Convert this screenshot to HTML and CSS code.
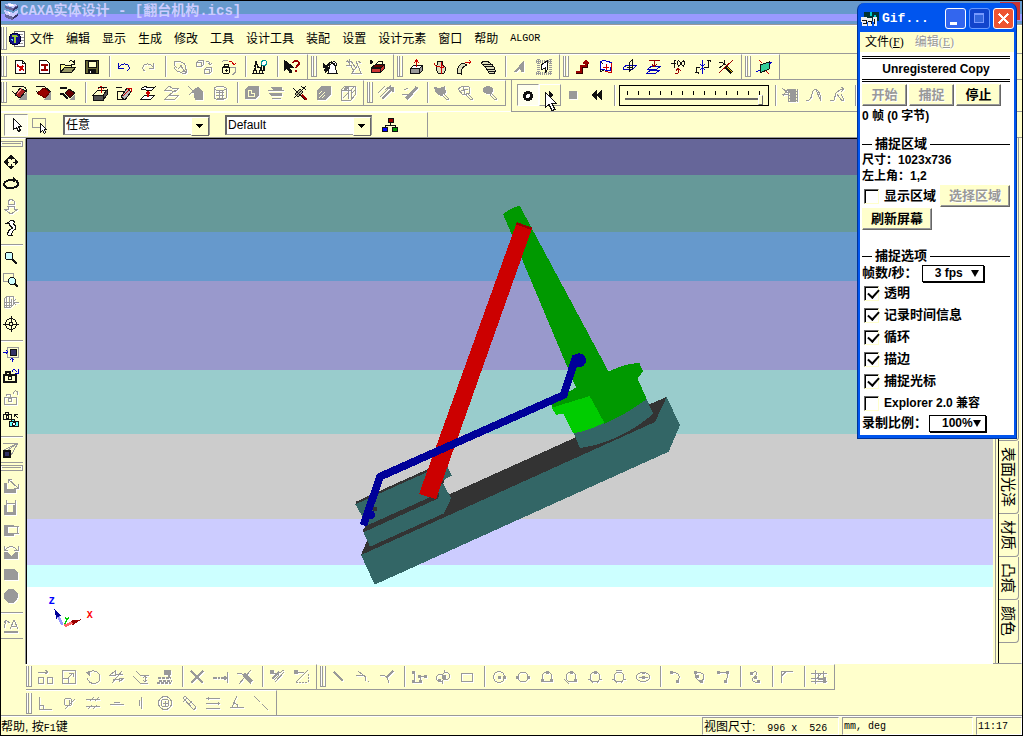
FILE: index.html
```html
<!DOCTYPE html>
<html lang="zh-CN">
<head>
    <meta charset="UTF-8">
    <meta name="viewport" content="width=device-width, initial-scale=1.0">
    <title>CAXA实体设计</title>
    <link rel="stylesheet" href="styles.css">
</head>
<body>
    <header class="titlebar">
        <svg class="logo" viewBox="0 0 16 18"><path fill="#ccf" d="M1 3l5-2 9 2-5 3zM1 8l9 3 5-3v3l-5 4-8-3z"/><path fill="#669" d="M10 6l5-3v3l-5 3-8-3V4zM2 12l8 3 5-3v2l-6 4-7-3z"/><path fill="#336" d="M10 7l5-3v2l-5 3zM10 15l5-3v2l-5 3z"/><path fill="#fff" d="M3 3l4-1 5 1-3 1zM3 9l5 2-2 1z"/></svg>
        <h1>CAXA实体设计 - [翻台机构.ics]</h1>
        <button class="close" aria-label="关闭程序"></button>
    </header>

    <nav class="menubar">
        <span class="grip"></span>
        <svg class="doc" viewBox="0 0 18 18"><path fill="#fff" stroke="#666" d="M6.500 1.500h10v15h-10z"/><path stroke="#999" d="M9 4.500h6M12 7.500h4M12 10.500h4M9 13.500h6"/><circle cx="7" cy="9" r="6" fill="#118" stroke="#003"/><path stroke="#9c3" stroke-width="2" d="M4 7q3-3 5 0M7 6v7"/><path fill="#6cf" d="M3 9h2v3z"/></svg>
        <button>文件</button>
        <button>编辑</button>
        <button>显示</button>
        <button>生成</button>
        <button>修改</button>
        <button>工具</button>
        <button>设计工具</button>
        <button>装配</button>
        <button>设置</button>
        <button>设计元素</button>
        <button>窗口</button>
        <button>帮助</button>
        <button class="latin">ALGOR</button>
    </nav>

    <!-- standard, feature and surface toolbars -->
    <div class="row">
        <div class="bar first">
            <span class="grip"></span>
            <button class="tb" title="新建"><svg viewBox="0 0 16 16"><path fill="#fff" d="M3.500 1.500h7l3 3v10h-10z"/><path d="M10.500 1.500v3h3"/><path stroke="#c00" stroke-width="2" d="M5 6l4 3 2-2M7 11l3-1 2 1"/></svg></button>
            <button class="tb" title="新图纸"><svg viewBox="0 0 16 16"><path fill="#fff" d="M3.500 1.500h7l3 3v10h-10z"/><path stroke="#900" stroke-width="2" d="M5 6h7M5 11h7M8.500 6v5"/></svg></button>
            <button class="tb" title="打开"><svg viewBox="0 0 16 16"><path fill="#ff9" d="M.5 13.500v-8h4l1 1h6v3"/><path fill="#996" d="M.5 13.500l4-5h11l-4 5z"/><path d="M9 3q3-3 5 1M14 1v4h-3"/></svg></button>
            <button class="tb" title="保存"><svg viewBox="0 0 16 16"><path fill="#663" d="M1.500 1.500h13v13h-13z"/><path fill="#ffc" d="M4 2h8v6H4z"/><path fill="#111" d="M4.500 10.500h7v4h-7z"/><path stroke="#fff" d="M6 12v2"/></svg></button>
            <span class="sep"></span>
            <button class="tb blue" title="撤销"><svg viewBox="0 0 16 16"><path d="M2.500 4v5h5M3 8q4-5 9-2 3 4-1 6"/></svg></button>
            <button class="tb off" title="重做"><svg viewBox="0 0 16 16"><path d="M13.500 4v5h-5M13 8q-4-5-9-2-3 4 1 6"/></svg></button>
            <span class="sep"></span>
            <button class="tb off" title="旋转"><svg viewBox="0 0 16 16"><path d="M2 2h4M2 2v4l3 3M6 3q6-1 8 5-1 6-6 5-5-1-6-5M8 6l6 8M14 14v-4M14 14h-4M6 10l4-4"/></svg></button>
            <button class="tb off" title="复制"><svg viewBox="0 0 16 16"><path d="M.5 3.500l2-2h5v4l-2 2h-5zM.5 3.500h5v4M8.500 10.500l2-2h5v4l-2 2h-5zM8.500 10.500h5v4M10 2q4 0 4 4M12 4l2 2 2-2"/></svg></button>
            <button class="tb" title="锁定"><svg viewBox="0 0 16 16"><path stroke="#999" d="M1.500 3.500l2-2h4M10.500 9v-1h5v5l-2 2h-2"/><path stroke="#c00" d="M9 2q4 0 5 4M12 4l2 2 2-2"/><circle cx="6" cy="11" r="4" fill="#ffc"/><path d="M4 8V5h4v3M6 10v3M5 11h3M3 8h6"/></svg></button>
            <span class="sep"></span>
            <button class="tb" title="浏览"><svg viewBox="0 0 16 16"><path d="M1 14l2-5 2 5zM3 9V5l1-3 1 3v4M7 14l2-5 2 5zM5 8h4V3M2 8l2-4 3 5"/><circle cx="12" cy="4" r="2.500" stroke="#099" fill="#fff"/><path d="M12 7v5" stroke-width="2"/></svg></button>
            <span class="sep"></span>
            <button class="tb" title="帮助"><svg viewBox="0 0 16 16"><path fill="#111" d="M0 1v11l3-3 3 5 2-1-3-5h4z"/><path stroke="#900" stroke-width="2" d="M9 4q1-3 4-2 4 2 0 5l-1 2M12 11v2"/></svg></button>
        </div>
        <div class="bar">
            <span class="grip"></span>
            <button class="tb" title="三维球"><svg viewBox="0 0 16 16"><path fill="#fff" d="M6 14l2-8 4-4 3 3-2 3 2 6z"/><path stroke-width="2" d="M1 5l4 3 3-5M2 11l5-2M9 3l4 3M1 8h4M3 13l4-3"/><path d="M6 14h9"/></svg></button>
            <button class="tb off" title="编辑三维球"><svg viewBox="0 0 16 16"><path d="M0 2h5l4 6M1 1l7 11M0 6h6M3 0v6M10 2l5 12H6l5-7M12 2l3 2"/></svg></button>
            <button class="tb" title="工具箱"><svg viewBox="0 0 16 16"><path d="M0 1v4l3-2z" fill="#111"/><path fill="#600" d="M1.500 8.500l4-3h9l-3 3z"/><path fill="#c33" d="M1.500 9.500h9v4h-9zM10.500 9.500l4-4v4l-4 4z"/><path d="M6 5l3-3h3v3"/></svg></button>
        </div>
        <div class="bar">
            <span class="grip"></span>
            <button class="tb" title="拉伸"><svg viewBox="0 0 16 16"><path fill="#fff" d="M2.500 9.500l3-3h9l-3 3z"/><path fill="#999" d="M2.500 9.500h9v5h-9zM11.500 9.500l3-3v5l-3 3z"/><path stroke="#c00" d="M8.500 8V2M6 4l2.500-3L11 4"/></svg></button>
            <button class="tb" title="旋转特征"><svg viewBox="0 0 16 16"><path fill="#ddb" d="M5 2h6l-1 3q6 4 2 9H6q-4-5 0-9z"/><path stroke="#c00" d="M9 3v12M2 4q1 5 10 4l-2-2"/></svg></button>
            <button class="tb" title="扫描"><svg viewBox="0 0 16 16"><path fill="#ddb" d="M1 14q0-8 6-10l4 2q-6 2-6 9z"/><path stroke="#c00" d="M9 3h6M13 1l2 2-2 2"/></svg></button>
            <button class="tb" title="放样"><svg viewBox="0 0 16 16"><path fill="#ddb" d="M1 4q4-4 9 0 6 4 5 10l-6 0Q7 9 1 4z"/><path d="M3 6l8-1M5 8l8-1M7 11l7-1M8 13l7-1"/></svg></button>
            <span class="sep"></span>
            <button class="tb off" title="拔模"><svg viewBox="0 0 16 16"><path class="f" d="M2 13L12 1v12h-3l-1-4-4 4z"/></svg></button>
            <button class="tb" title="抽壳"><svg viewBox="0 0 16 16"><path stroke="#999" stroke-width="3" stroke-dasharray="1 1" d="M0 2h16M0 14h16M2 0v16M14 0v16"/><path fill="#fff" d="M5 6l6-4v9l-2 3v-5l-4 2z"/></svg></button>
        </div>
        <div class="bar">
            <span class="grip"></span>
            <button class="tb" title="三维曲线"><svg viewBox="0 0 16 16"><path stroke="#300" stroke-width="3" d="M2 13h5V7h5V4"/><path stroke="#900" stroke-width="2" d="M2 13h5V7h5V3M9 5l3-3 3 3"/></svg></button>
            <button class="tb" title="曲面"><svg viewBox="0 0 16 16"><path fill="#fff" stroke="#00c" d="M2 3q4-3 12 1l-2 8-10-2z"/><path stroke="#c00" d="M14 4l-1 10-6-2M5 8h6M8 5v6"/><path d="M3 3l2 2M2 10v3l4-2"/></svg></button>
            <button class="tb blue" title="基准面"><svg viewBox="0 0 16 16"><path d="M1 9l4-3h10l-4 4H1z"/><path stroke="#111" d="M7 13V4l3-3v9zM5 8h6"/></svg></button>
            <button class="tb blue" title="偏移面"><svg viewBox="0 0 16 16"><path d="M2 10l4-3h9l-4 3zM1 14l4-3h9l-4 3z"/><path stroke="#900" d="M3 1.500h11M8.500 2v6M6 5l2 3 3-3"/></svg></button>
            <button class="tb" title="公式曲线"><svg viewBox="0 0 16 16"><path d="M4 9V2l2-1M1 4h5M9 1q-3 3 0 7M13 1q3 3 0 7M9 2l4 5M13 2L9 7"/><path stroke="#900" d="M5 15l3-1v-4M6 12l2-3 3 3"/></svg></button>
            <button class="tb" title="组合曲线"><svg viewBox="0 0 16 16"><path d="M2 14l1-6h3M10 8h4V2"/><path stroke="#00c" d="M8.500 1v14M6 5l2.500 2L11 5M6 11l2.500-2 2.500 2"/><path d="M1 13h3v2M13 1h3v2"/></svg></button>
            <button class="tb" title="裁剪曲线"><svg viewBox="0 0 16 16"><path d="M1 3q8 0 12 12M7 1q0 5-6 8"/><path stroke="#900" d="M1 14L15 1"/><path stroke-width="3" d="M8 8l6 6"/><path stroke="#fc0" d="M9 8l5 5"/></svg></button>
        </div>
        <div class="bar">
            <span class="grip"></span>
            <button class="tb" title="剖视"><svg viewBox="0 0 16 16"><path fill="#3c9" d="M4 6l9-3v7l-9 4z"/><path stroke="#00c" d="M0 13l4-2M13 5l3-2"/><path stroke="#c00" d="M3 1l3 3M10 12l3 3"/></svg></button>
        </div>
    </div>

    <!-- chamfer / solid tools and the animation player -->
    <div class="row tall">
        <div class="bar first">
            <span class="grip"></span>
            <button class="tb" title="圆角过渡"><svg viewBox="0 0 16 16"><path fill="#999" stroke="none" d="M6 15l9-9v9z"/><path fill="#a22" d="M3 10l5-7 6 3-6 7z"/><path stroke="#f99" d="M5 9l5-6"/><path d="M0 1h9q6 1 6 6M0 6l3 3"/></svg></button>
            <button class="tb" title="边过渡"><svg viewBox="0 0 16 16"><path fill="#999" stroke="none" d="M8 15l7-9v9z"/><path fill="#900" stroke="#600" d="M1 8l7-5 6 4-5 6z"/><path d="M0 1h8l7 6M0 6l2 2"/></svg></button>
            <button class="tb" title="倒角"><svg viewBox="0 0 16 16"><path fill="#999" stroke="none" d="M9 15l6-6v6z"/><path fill="#600" d="M5 8l4-4 6 4-5 5z"/><path stroke-width="2" d="M0 3h7M0 9h3l5 5"/></svg></button>
            <span class="sep"></span>
            <button class="tb" title="面拔模"><svg viewBox="0 0 16 16"><path fill="#ffc" d="M1 10l5-5h9l-4 5z"/><path fill="#555" d="M1 10h10v5H1zM11 10l4-5v5l-4 5z"/><path stroke="#c00" d="M9 8V1M6 4l3-3 3 3"/><path d="M6 2h9"/></svg></button>
            <button class="tb" title="表面移动"><svg viewBox="0 0 16 16"><path d="M0 2h6M1 6h6v8H1z"/><path fill="#bbb" d="M5 12l6-9 4 4-6 8z"/><path stroke="#c00" d="M7 11l8-8M11 3h4v4"/></svg></button>
            <button class="tb" title="表面等距"><svg viewBox="0 0 16 16"><path fill="#fff" d="M1 4q4-4 7-1l7-1-4 4q-5-1-10-2zM1 14l4-4h10l-4 4z"/><path stroke="#c00" stroke-width="2" d="M8 12V7M6 9l2-2 2 2"/></svg></button>
            <button class="tb off" title="表面匹配"><svg viewBox="0 0 16 16"><path d="M1 5l4-4 3 2h7l-4 4q-5-2-10-2zM1 14l4-4h10l-4 4zM4 11l8-6"/></svg></button>
            <button class="tb off" title="删除表面"><svg viewBox="0 0 16 16"><path class="f" d="M5 5l5-3 5 5v8H7z"/><path d="M0 1l14 13M1 10l8-7"/></svg></button>
            <button class="tb off" title="编辑半径"><svg viewBox="0 0 16 16"><path d="M2 3q6-4 12 0v10q-6 4-12 0zM2 4q6 4 12 0M4 7h8M4 10h8M5 13h7M7 6v8M10 6v8"/></svg></button>
            <span class="sep"></span>
            <button class="tb off" title="布尔"><svg viewBox="0 0 16 16"><path class="f" d="M1 4l3-3h11v9l-4 4H1z"/><path stroke="#ffc" d="M4 5v6h6V8H7V5z"/></svg></button>
            <button class="tb off" title="分割"><svg viewBox="0 0 16 16"><path class="f" d="M3 2h11v3H5zM0 8h14v3H3zM4 13h9v1H4z"/><path d="M0 6l16-1"/></svg></button>
            <button class="tb" title="裁剪"><svg viewBox="0 0 16 16"><path fill="#bb9" d="M3 9l5-5 3 3-5 5z"/><path d="M1 3l12 12M2 13L14 1M9 1l5 4"/><path stroke="#900" stroke-width="2" d="M10 10l5 5"/></svg></button>
            <button class="tb off" title="抽壳体"><svg viewBox="0 0 16 16"><path class="f" d="M1 5l4-4h10v8l-5 6H1z"/><path stroke="#ffc" d="M3 13l6-6M3 9l3-3M6 13l3-3"/></svg></button>
            <button class="tb off" title="装配特征"><svg viewBox="0 0 16 16"><path d="M1 5l4-4h10v9l-4 5H1zM1 5h10v10M11 5l4-4M8 1v13M3 13l6-6M12 8l3-3"/><path class="f" d="M5 2h4l-2 3H4z"/></svg></button>
        </div>
        <div class="bar">
            <span class="grip"></span>
            <button class="tb off" title="定位"><svg viewBox="0 0 16 16"><path d="M0 8l7-7M2 12l9-9M7 5l5-4v5"/><path stroke-width="2" d="M4 14l11-11M10 3h5v4"/></svg></button>
            <button class="tb off" title="约束"><svg viewBox="0 0 16 16"><path d="M0 9h7l5-4M2 5l4-2"/><path stroke-width="3" d="M4 14l5-5 6-7"/></svg></button>
            <span class="sep"></span>
            <button class="tb off" title="选择零件"><svg viewBox="0 0 16 16"><path class="f" d="M0 2l5 1 6-2 1 7-5 3-5-3z"/><path d="M9 8l6 6-2 1-5-5z"/></svg></button>
            <button class="tb off" title="选择面"><svg viewBox="0 0 16 16"><path d="M0 4l5-3 6 1 1 6-7 2zM3 6l7-2M5 2l2 7M9 8l6 6-2 1-5-5z"/></svg></button>
            <button class="tb off" title="选择边"><svg viewBox="0 0 16 16"><ellipse class="f" cx="6" cy="5" rx="5" ry="4"/><path d="M9 8l6 6-2 1-5-5z"/></svg></button>
        </div>
        <div class="player">
            <button class="tb on" title="开"><svg viewBox="0 0 16 16"><circle cx="8" cy="9" r="3.500" fill="#fff" stroke-width="3"/></svg></button>
            <button class="tb up" title="播放"><svg viewBox="0 0 16 16"><path fill="#111" d="M7 4l4 4-4 4z"/></svg><svg class="pointer" viewBox="0 0 12 20"><path fill="#fff" stroke="#111" d="M.5.5v15l3.500-3 3 6 3-1-3-6h4.500z"/></svg></button>
            <button class="tb off" title="停止"><svg viewBox="0 0 16 16"><path class="f" d="M4 4h8v8H4z"/></svg></button>
            <button class="tb" title="回退"><svg viewBox="0 0 16 16"><path fill="#111" d="M7 4v8L3 8zM12 4v8L8 8z"/></svg></button>
            <span class="sep"></span>
            <span class="track"><input type="range" min="0" max="100" value="100" aria-label="时间"></span>
            <span class="sep"></span>
            <button class="tb off" title="动画"><svg viewBox="0 0 16 16"><path class="f" d="M6 2h10v13H6z"/><path d="M0 1l7 6M0 7h7M1 9l5-7"/><path stroke="#ffc" stroke-dasharray="2 1" d="M14.500 2v13M7.500 6v9"/></svg></button>
            <button class="tb off" title="路径"><svg viewBox="0 0 16 16"><path d="M0 14q5 0 6-7 2-7 6-3 3 4 3 10M10 3l4 9"/></svg></button>
            <button class="tb off" title="关键帧"><svg viewBox="0 0 16 16"><path d="M0 13h4l2-7 5-4h3M11 0l3 2-3 3M7 7l5 7 2-1-3-6"/></svg></button>
            <span class="sep"></span>
        </div>
    </div>

    <div class="row select-row">
        <div class="bar select-bar">
            <button class="tb on" title="选择"><svg viewBox="0 0 16 16"><path fill="#fff" d="M5.500 1.500v11l3-2 2 4 2-1-2-4h3z"/></svg></button>
            <button class="tb" title="框选"><svg viewBox="0 0 16 16"><path stroke="#999" d="M.5 1.500h13v9H.5z"/><path fill="#fff" d="M8.500 6.500v9l2-2 2 3 1-1-1-3h2z"/></svg></button>
            <span class="combo"><select aria-label="选择过滤"><option>任意</option></select></span>
            <span class="combo"><select aria-label="配置"><option>Default</option></select></span>
            <button class="tb" title="结构"><svg viewBox="0 0 16 16"><path d="M8.500 5v4M3.500 11V8.500h10V11"/><path fill="#900" d="M6.500 1.500h5v4h-5z"/><path fill="#00f" d="M.5 10.500h5v4h-5z"/><path fill="#090" d="M10.500 10.500h5v4h-5z"/></svg></button>
        </div>
    </div>

    <main>
        <aside class="side">
            <div class="vbar">
                <span class="grip"></span>
                <button class="tb" title="平移"><svg viewBox="0 0 16 16"><path fill="#111" d="M8 1l3 3H5zM8 15l3-3H5zM1 8l3-3v6zM15 8l-3-3v6z"/><path d="M8 4v2M8 10v2M4 8h2M10 8h2"/></svg></button>
                <button class="tb" title="动态旋转"><svg viewBox="0 0 16 16"><path stroke-width="2" d="M11 4q-8-1-10 4 1 5 8 4 7-1 6-5l-2-3"/><path d="M10 1v5l3-2z" fill="#111"/></svg></button>
                <button class="tb off" title="前后缩放"><svg viewBox="0 0 16 16"><path d="M5 6V3l3-2 3 2v3zM4 8h8M5 8v3H1l7 5 7-5h-4V8"/></svg></button>
                <button class="tb" title="任意视向"><svg viewBox="0 0 16 16"><path fill="#fff" d="M9 0L4 3h3q-2 2 3 5-6 2-5 7h4q-1-4 4-6 0-4-3-5l2-2z"/></svg></button>
                <span class="sep"></span>
                <button class="tb" title="缩放"><svg viewBox="0 0 16 16"><circle cx="6" cy="6" r="4" fill="#cff"/><path stroke-width="2" d="M9 9l5 5"/></svg></button>
                <button class="tb" title="窗口缩放"><svg viewBox="0 0 16 16"><path stroke="#999" d="M.5 1.500h10v8H.5z"/><circle cx="9" cy="9" r="3.500" fill="#cff"/><path stroke-width="2" d="M12 12l3 3"/></svg></button>
                <button class="tb off" title="指定面"><svg viewBox="0 0 16 16"><path d="M1 5l3-3h6v9l-2 2H1zM1 8h7M1 11h7M3 3v10M6 3v10M8 5v8M16 8h-5M13 5l-3 3 3 3"/></svg></button>
                <button class="tb" title="指定中心"><svg viewBox="0 0 16 16"><circle cx="8" cy="8" r="5.500"/><circle cx="8" cy="8" r="2"/><path d="M8.500 0v6M8.500 10v6M0 8.500h6M10 8.500h6"/></svg></button>
                <span class="sep"></span>
                <button class="tb" title="全部显示"><svg viewBox="0 0 16 16"><path stroke="#999" d="M4.500 1.500h11v10h-11z"/><path fill="#336" d="M7.500 3.500h6v6h-6z"/><path stroke="#00c" d="M0 6.500h5M3 4l2 2-2 2M9.500 16v-4M7 14l2-2 2 2"/></svg></button>
                <button class="tb" title="保存视向"><svg viewBox="0 0 16 16"><path stroke-width="2" d="M1 7h12v7H1zM3 6V4h4v3"/><circle cx="7" cy="10" r="2"/><path stroke="#00c" d="M9 4q2-5 5 0M15 1v4h-3"/></svg></button>
                <button class="tb off" title="恢复视向"><svg viewBox="0 0 16 16"><path d="M1 7h12v7H1zM3 6V4h4v3M10 4q2-5 5-2-2 2 0 3"/><circle cx="7" cy="10" r="2"/></svg></button>
                <button class="tb" title="切换相机"><svg viewBox="0 0 16 16"><path fill="#ffc" d="M.5 2.500h8v5h-8zM2.500 2.500v-2h3v2"/><path fill="#6ff" d="M6.500 9.500h9v5h-9zM8.500 9.500v-2h3v2"/><circle cx="4.500" cy="5" r="1.500"/><circle cx="11" cy="12" r="1.500" fill="#fff"/><path d="M11 2l4 4M11 5V2h4"/></svg></button>
                <span class="sep"></span>
                <button class="tb" title="透视"><svg viewBox="0 0 16 16"><path stroke="#999" d="M0 1h15L1 8M15 1L7 15M15 1L5 8"/><path fill="#336" stroke-width="2" d="M1 9h6v6H1z"/></svg></button>
            </div>
            <div class="vbar">
                <span class="grip"></span>
                <button class="tb off" title="线性标注"><svg viewBox="0 0 16 16"><path class="f" d="M1 5h3v6h9v4H1z"/><path d="M5 1l10 9M5 5V1h4M15 6v4h-4"/></svg></button>
                <button class="tb off" title="水平标注"><svg viewBox="0 0 16 16"><path class="f" d="M1 5h3v7h6V5h3v10H1z"/><path d="M3 0v5M12 0v5M3 3h9"/></svg></button>
                <button class="tb off" title="垂直标注"><svg viewBox="0 0 16 16"><path class="f" d="M1 3h10v2H5v6h6v3H1z"/><path d="M11 4h5M11 11h5M14 4v7"/></svg></button>
                <button class="tb off" title="角度标注"><svg viewBox="0 0 16 16"><path class="f" d="M1 8h3l4 4 4-4h3v7H1z"/><path d="M2 6q6-7 12 0M1 2v4h4M15 2v4h-4"/></svg></button>
                <button class="tb off" title="半径标注"><svg viewBox="0 0 16 16"><path class="f" d="M1 3h10l4 4v7H1z"/></svg></button>
                <button class="tb off" title="直径标注"><svg viewBox="0 0 16 16"><circle class="f" cx="8" cy="8" r="7"/></svg></button>
                <span class="sep"></span>
                <button class="tb off" title="文字"><svg viewBox="0 0 16 16"><path class="f" d="M1 13h14v2H1z"/><path d="M7 11l4-9 4 9M8 8h5M1 10l2-8 4 3M1 5l2-3"/></svg></button>
            </div>
        </aside>

        <section class="canvas">
            <svg class="model" viewBox="0 0 1080 1230">
                <path fill="#333" d="M63 1095L80 1055 330 912 705 743 930 642 980 621 945 700z"/>
                <path fill="#366" d="M63 1095L945 696 980 621 1020 706 986 785 104 1184z"/>
                <path fill="#333" d="M46 936L262 838 325 830 310 880 333 925 312 972 90 1070 70 1020 80 1000z"/>
                <path fill="#366" d="M46 943L262 846 320 826 336 857 305 873 296 910 82 1006z"/>
                <path fill="#366" d="M70 1026L295 924 290 890 310 880 333 925 312 970 90 1070z"/>
                <path fill="#333" d="M70 1018L290 919 297 908 295 925 70 1027zM100 950h11v12h-11z"/>
                <path fill="#366" d="M700 727q110-20 218-103l22 47q-100 86-220 103z"/>
                <path fill="#090" d="M489 72q25-18 50-25L806 545q50-25 92-26l11 25-16 22 27 61q-60 45-128 75l-45-82-110 35-4-20 75-42z"/>
                <path fill="#0c0" d="M636 653l113-35 44 80q-45 24-93 32l-29-58-24 2z"/>
                <path fill="#c00" d="M530 98l46 17-288 812-51-15z"/>
                <path fill="#900" d="M530 96l46 17-2 7-46-17z"/>
                <path fill="none" stroke="#009" stroke-width="23" d="M70 1006L120 860 671 615 709 497"/>
                <circle cx="717" cy="511" r="21" fill="#009"/>
                <circle cx="91" cy="974" r="14" fill="#009"/>
            </svg>
            <svg class="axes" viewBox="140 585 156 114">
                <path fill="#009" d="M162 627l20 20-14 10z"/><path stroke="#99f" stroke-width="8" d="M174 651l12 24"/>
                <path fill="#900" d="M243 658l-26 18-5-14z"/><path stroke="#f66" stroke-width="8" d="M192 678l24-10"/>
                <path stroke="#0c0" stroke-width="4" d="M194 652l5 8 6-8M199 660l-5 12"/>
                <text x="145" y="611" fill="#00f">Z</text>
                <text x="259" y="654" fill="#f00">X</text>
            </svg>
        </section>

        <aside class="catalog">
            <div class="tabs">
                <button aria-label="图素"></button>
                <button>表面光泽</button>
                <button>材质</button>
                <button>凸痕</button>
                <button>颜色</button>
            </div>
        </aside>
    </main>

    <!-- 2D sketch toolbars -->
    <div class="row sketch">
        <div class="bar first">
            <span class="grip"></span>
            <button class="tb off" title="移动"><svg viewBox="0 0 16 16"><path d="M1 3h8M8 1l3 2-3 2M1.500 8.500h5v6h-5zM10.500 8.500h5v6h-5z"/></svg></button>
            <button class="tb off" title="缩放草图"><svg viewBox="0 0 16 16"><path d="M1.500 1.500h13v13h-13zM1.500 9.500h6v5M6 10l6-6M8 4h4v4"/></svg></button>
            <button class="tb off" title="旋转草图"><svg viewBox="0 0 16 16"><path d="M3 4q6-5 11 1 3 7-3 9-6 2-9-5"/><path class="f" d="M0 3l5-1v5z"/></svg></button>
            <button class="tb off" title="镜像"><svg viewBox="0 0 16 16"><path d="M1 6h5V2zM10 9h5l-5 4zM3 14L13 2M7 5h7M4 10h7"/></svg></button>
            <button class="tb off" title="等距"><svg viewBox="0 0 16 16"><path d="M3 2l4 4h9M0 7l7 7h8M12 7v6M10 9l2-2 2 2M10 11l2 2 2-2"/></svg></button>
            <button class="tb off" title="投影"><svg viewBox="0 0 16 16"><path class="f" d="M7 1h7v5H7z"/><path stroke-width="2" stroke-dasharray="3 1" d="M1 9h13M2 12h13M0 14h14M12 6v3"/></svg></button>
            <span class="sep"></span>
            <button class="tb off" title="打断"><svg viewBox="0 0 16 16"><path d="M2 2l12 12M14 2L2 14" stroke-width="2"/></svg></button>
            <button class="tb off" title="延长"><svg viewBox="0 0 16 16"><path stroke-width="2" d="M0 9h4M5 9h2M8 9h4"/><path d="M14.500 3v11M11 7l3 2-3 2M9 9h5"/></svg></button>
            <button class="tb off" title="裁剪草图"><svg viewBox="0 0 16 16"><path d="M0 4h4l10 11M14 1L2 15"/><path stroke-width="3" d="M7 5l8 8"/></svg></button>
            <span class="sep"></span>
            <button class="tb off" title="显示约束"><svg viewBox="0 0 16 16"><path class="f" d="M1 1h4v4H1z"/><path d="M5 4h4v3l-4 4M10 4l5-3M6 13l9-10"/><path stroke-width="2" d="M3 10l7-7"/></svg></button>
            <button class="tb off" title="显示端点"><svg viewBox="0 0 16 16"><path class="f" d="M1 1h4v4H1z"/><path stroke-dasharray="2 1" d="M3 13h12V4"/><path d="M3 13L15 1M5 3h6"/></svg></button>
        </div>
        <div class="bar">
            <span class="grip"></span>
            <button class="tb off" title="直线"><svg viewBox="0 0 16 16"><path stroke-width="2" d="M3 3l9 9"/></svg></button>
            <button class="tb off" title="切线"><svg viewBox="0 0 16 16"><path d="M3 2l5 4M1 6h7q3 1 2 6M13 12h1M8 6l3 2"/></svg></button>
            <button class="tb off" title="法线"><svg viewBox="0 0 16 16"><path stroke-width="2" d="M14 2L8 8"/><path d="M1 6l5 1q4 2 3 7"/></svg></button>
            <span class="sep"></span>
            <button class="tb off" title="连续直线"><svg viewBox="0 0 16 16"><path d="M3 3v10h6V7h6"/><path class="f" d="M1 2h3v3H1zM1 11h3v3H1zM8 11h3v3H8zM7 6h3v3H7zM13 6h3v3h-3z"/></svg></button>
            <button class="tb off" title="连续圆弧"><svg viewBox="0 0 16 16"><circle cx="5" cy="9" r="3.500"/><circle cx="11" cy="7" r="3.500"/><path class="f" d="M7 6h4v4H7zM3 10h3v3H3z"/><path d="M9 1v3M7 12v3"/></svg></button>
            <button class="tb off" title="矩形"><svg viewBox="0 0 16 16"><path d="M2.500 4.500h11v8h-11z"/></svg></button>
            <span class="sep"></span>
            <button class="tb off" title="圆心半径"><svg viewBox="0 0 16 16"><circle cx="8" cy="8" r="5.500"/><path class="f" d="M7 7h3v3H7zM12 7h3v3h-3z"/></svg></button>
            <button class="tb off" title="两点圆"><svg viewBox="0 0 16 16"><circle cx="8" cy="8" r="5"/><path class="f" d="M1 7h3v3H1zM12 7h3v3h-3z"/></svg></button>
            <button class="tb off" title="三点圆"><svg viewBox="0 0 16 16"><circle cx="8" cy="8" r="5"/><path class="f" d="M7 2h3v3H7zM2 10h3v3H2zM11 10h3v3h-3z"/></svg></button>
            <button class="tb off" title="一切点圆"><svg viewBox="0 0 16 16"><circle cx="8" cy="8" r="5"/><path class="f" d="M7 2h3v3H7zM11 10h3v3h-3z"/><path d="M1 10l5 5"/></svg></button>
            <button class="tb off" title="两切点圆"><svg viewBox="0 0 16 16"><circle cx="8" cy="8" r="5"/><path class="f" d="M7 2h3v3H7z"/><path d="M1 10h2l3 4M15 10h-2l-3 4"/></svg></button>
            <button class="tb off" title="三切点圆"><svg viewBox="0 0 16 16"><circle cx="8" cy="8" r="5"/><path d="M5 1.500h6M1 10h2l3 4M15 10h-2l-3 4"/></svg></button>
            <button class="tb off" title="椭圆"><svg viewBox="0 0 16 16"><ellipse cx="8" cy="8" rx="7" ry="4.500"/><path class="f" d="M7 7h3v3H7zM7 3h3v2H7z"/><path d="M4 8.500h9"/></svg></button>
            <span class="sep"></span>
            <button class="tb off" title="圆弧"><svg viewBox="0 0 16 16"><path class="f" d="M3 2h3v3H3zM9 11h3v3H9z"/><path d="M5 3q10 1 6 9"/></svg></button>
            <button class="tb off" title="三点弧"><svg viewBox="0 0 16 16"><path class="f" d="M3 2h3v3H3zM9 11h3v3H9zM5 6h3v3H5z"/><path d="M5 3q12 1 6 9M4 5q0 5 6 8"/></svg></button>
            <button class="tb off" title="圆心弧"><svg viewBox="0 0 16 16"><path class="f" d="M2 2h3v3H2zM9 11h3v3H9zM11 2h3v3h-3z"/><path d="M5 3h7q2 5-2 9"/></svg></button>
            <span class="sep"></span>
            <button class="tb off" title="样条"><svg viewBox="0 0 16 16"><path class="f" d="M3 3h3v3H3zM7 7h3v3H7zM10 11h3v3h-3z"/><path d="M5 4q5-3 5 1l-5 5q0 4 7 3"/></svg></button>
            <span class="sep"></span>
            <button class="tb off" title="倒圆"><svg viewBox="0 0 16 16"><path d="M2.500 14V2.500H14M2 10q1-7 9-8"/></svg></button>
            <span class="sep"></span>
            <button class="tb off" title="构造线"><svg viewBox="0 0 16 16"><path d="M0 4h16M0 12h16M4 1v14M12 2v12M5 10l6-6M7 4v6h6"/><path class="f" d="M13 8h2v6h-2zM0 9h14v1H0z"/></svg></button>
        </div>
    </div>
    <div class="row sketch wide">
        <div class="bar first">
            <span class="grip"></span>
            <button class="tb off" title="垂直"><svg viewBox="0 0 16 16"><path d="M2.500 2v12H15M2 10h4v4"/></svg></button>
            <button class="tb off" title="相切"><svg viewBox="0 0 16 16"><circle cx="7" cy="7" r="4"/><path d="M4 14L14 4M8 5v6"/></svg></button>
            <button class="tb off" title="平行"><svg viewBox="0 0 16 16"><path d="M1 4.500h14M1 11.500h14M5 6l4-4M10 6l4-4M3 14l4-4M8 14l4-4"/></svg></button>
            <button class="tb off" title="水平"><svg viewBox="0 0 16 16"><path d="M1 9.500h14M5 7.500h6"/></svg></button>
            <button class="tb off" title="竖直"><svg viewBox="0 0 16 16"><path d="M8.500 2v12M6.500 5v6"/></svg></button>
            <button class="tb off" title="同心"><svg viewBox="0 0 16 16"><circle cx="8" cy="8" r="6.500"/><circle cx="8" cy="8" r="4"/><path d="M8 6v5M6 8h5"/></svg></button>
            <button class="tb off" title="尺寸"><svg viewBox="0 0 16 16"><path d="M2 3l2-2 11 11-2 3zM2 7l4-4M8 9l3-3"/></svg></button>
            <button class="tb off" title="等长"><svg viewBox="0 0 16 16"><path d="M1 3.500h14M1 8.500h14M1 13.500h14M3 2v3M13 7v3"/></svg></button>
            <button class="tb off" title="角度"><svg viewBox="0 0 16 16"><path d="M1 12.500h14M3 12L8 1M5 8q4 1 4 4"/></svg></button>
            <button class="tb off" title="共线"><svg viewBox="0 0 16 16"><path d="M1 1l6 6M9 9l6 6"/></svg></button>
        </div>
    </div>

    <footer class="status">
        <span class="hint">帮助, 按<span class="latin">F1</span>键</span>
        <span class="pane size">视图尺寸:<span class="latin">&nbsp;&nbsp;996 x &nbsp;526</span></span>
        <span class="pane units latin">mm, deg</span>
        <span class="pane clock latin">11:17</span>
    </footer>

    <!-- floating capture window -->
    <div class="capture">
        <div class="caption">
            <svg class="gif" viewBox="0 0 18 16"><path fill="#033" d="M3 1h15v9H3z"/><path fill="#0cc" d="M9 1h2v4H9zM13 4h2v3h-2z"/><path fill="#eee" d="M0 6h6v9H1zM6 7h5v8H7zM12 6h4v9h-3z"/><path stroke="#111" d="M1 9h4v3H2M7 10h3v3M13 8v5"/></svg>
            <strong>Gif...</strong>
            <button class="min" aria-label="最小化"></button>
            <button class="max" aria-label="最大化"></button>
            <button class="quit" aria-label="关闭"><svg viewBox="0 0 20 20"><path d="M5 5l10 10M15 5L5 15"/></svg></button>
        </div>
        <nav class="capture-menu">
            <button>文件<span class="key">(<u>F</u>)</span></button>
            <button disabled>编辑<span class="key">(<u>E</u>)</span></button>
        </nav>
        <form class="capture-body">
            <p class="notice">Unregistered Copy</p>
            <div class="actions">
                <button type="button" disabled>开始</button>
                <button type="button" disabled>捕捉</button>
                <button type="button">停止</button>
            </div>
            <p class="frames">0 帧 (0 字节)</p>
            <h2>捕捉区域</h2>
            <p>尺寸：1023x736</p>
            <p>左上角：1,2</p>
            <div class="line">
                <label><input type="checkbox">显示区域</label>
                <button type="button" disabled>选择区域</button>
            </div>
            <button type="button">刷新屏幕</button>
            <h2 class="options">捕捉选项</h2>
            <div class="line drop-line">
                <label for="fps">帧数/秒：</label>
                <span class="drop"><select id="fps"><option>3 fps</option></select></span>
            </div>
            <label><input type="checkbox" checked>透明</label>
            <label><input type="checkbox" checked>记录时间信息</label>
            <label><input type="checkbox" checked>循环</label>
            <label><input type="checkbox" checked>描边</label>
            <label><input type="checkbox" checked>捕捉光标</label>
            <label class="mixed"><input type="checkbox">Explorer 2.0 兼容</label>
            <div class="line drop-line">
                <label for="ratio">录制比例：</label>
                <span class="drop small"><select id="ratio"><option>100%</option></select></span>
            </div>
        </form>
    </div>
</body>
</html>
```
FILE: styles.css
```css
* {
    box-sizing: border-box;
}
body {
    display: flex;
    flex-direction: column;
    position: relative;
    min-height: 100vh;
    margin: 0;
    border: 1px solid #000;
    background: #ffc;
    color: #000;
    font: 12px/18px "Liberation Sans", "Noto Sans CJK SC", sans-serif;
    overflow: hidden;
}
button, select, input {
    margin: 0;
    padding: 0;
    border: 0;
    border-radius: 0;
    background: none;
    color: inherit;
    font: inherit;
}
svg {
    fill: none;
    shape-rendering: crispEdges;
}
.latin {
    font-family: "Liberation Mono", monospace;
    font-size: 10px;
}

/* title and menu */
.titlebar {
    display: flex;
    align-items: center;
    height: 24px;
    padding: 0 2px 4px;
    border-bottom: 1px solid #999;
    background: linear-gradient(#69c 13px, #99f 13px, #99f 20px, #69c 20px);
}
.logo {
    width: 16px;
    height: 18px;
}
.titlebar h1 {
    flex: 1;
    margin: 0 1px;
    color: #ccf;
    font: bold 14px/18px "Liberation Mono", "Noto Sans CJK SC", monospace;
}
.close {
    width: 20px;
    height: 18px;
    background: #c33;
}
.menubar {
    display: flex;
    align-items: center;
    height: 29px;
    padding-bottom: 2px;
    border-top: 1px solid #fff;
    border-bottom: 1px solid #999;
}
.menubar .grip {
    height: 23px;
}
.doc {
    width: 18px;
    height: 18px;
    margin: 0 -2px 0 0;
}
.menubar button {
    padding: 0 6px;
}

/* toolbars */
.row {
    display: flex;
    height: 26px;
    border-bottom: 1px solid #999;
}
.bar {
    display: flex;
    align-items: center;
    height: 25px;
    padding: 0 3px 1px;
    border-top: 1px solid #fff;
    border-right: 1px solid #999;
}
.bar.first {
    padding-left: 0;
}
.grip {
    flex: none;
    width: 6px;
    height: 21px;
    margin-right: 1px;
    border: 1px solid #999;
    border-width: 0 1px 1px 1px;
    box-shadow: inset 1px 0 #fff, inset -1px 0 #fff;
    background: linear-gradient(90deg, transparent 1px, #999 1px, #999 2px, transparent 2px);
}
.tb {
    display: flex;
    flex: none;
    align-items: center;
    justify-content: center;
    width: 24px;
    height: 22px;
    color: #111;
}
.tb svg {
    width: 16px;
    height: 16px;
    stroke: currentColor;
    overflow: visible;
}
.tb.blue {
    color: #00b;
}
.tb.off {
    color: #999;
}
.tb.off svg {
    filter: drop-shadow(1px 1px 0 #fff);
}
.tb .f {
    fill: currentColor;
    stroke: none;
}
.tb.on {
    border: 1px solid;
    border-color: #999 #fff #fff #999;
    background: #ffe;
}
.tb.up {
    position: relative;
    border: 1px solid;
    border-color: #fff #999 #999 #fff;
}
.sep {
    flex: none;
    width: 3px;
    height: 21px;
    margin: 0 1px 0 4px;
    border-left: 1px solid transparent;
    border-right: 1px solid #fff;
    background: #999;
    background-clip: padding-box;
}
.row.tall {
    height: 32px;
    border-bottom-color: #fff;
}
.tall .bar {
    height: 26px;
    border-bottom: 1px solid #999;
}
.player {
    display: flex;
    flex: 1;
    align-items: center;
    height: 32px;
    margin-left: 5px;
    padding-left: 5px;
    padding-bottom: 1px;
    border-left: 1px solid #999;
    border-bottom: 1px solid #999;
}
.player .on,
.player .up {
    width: 22px;
}
.pointer {
    position: absolute;
    left: 5px;
    top: 7px;
    z-index: 1;
}
.tb .pointer {
    width: 12px;
    height: 20px;
}
.track {
    display: flex;
    align-items: flex-end;
    width: 150px;
    height: 21px;
    margin: 0 1px 0 2px;
    border: 1px solid #000;
    background: repeating-linear-gradient(90deg, #000 0 1px, transparent 1px 11px) 7px 5px / 134px 4px no-repeat;
}
.track input {
    appearance: none;
    width: 138px;
    height: 10px;
    margin: 0 5px;
    background: linear-gradient(#666, #666) 0 3px / 100% 2px no-repeat;
}
.track input::-webkit-slider-thumb {
    appearance: none;
    width: 5px;
    height: 10px;
    border: 1px solid;
    border-color: #fff #666 #666 #fff;
    background: #ffc;
}
.select-bar {
    width: 427px;
    padding: 0 3px;
}
.select-bar .tb {
    margin-right: 2px;
}
.select-bar .on {
    margin-right: 0;
}
.combo {
    position: relative;
    flex: none;
    width: 147px;
    height: 20px;
    margin: 0 6px 0 9px;
    border: 1px solid #999;
    border-top: 2px solid #666;
    border-left: 2px solid #666;
    background: #fff;
}
.combo select {
    display: block;
    appearance: none;
    width: 100%;
    height: 17px;
    padding-left: 1px;
    line-height: 17px;
}
/* stepped arrow of the drop button */
.combo::after {
    content: "";
    position: absolute;
    top: 0;
    right: 0;
    width: 16px;
    height: 17px;
    border: 1px solid;
    border-color: #fff #666 #666 #fff;
    background: linear-gradient(#000, #000) 4px 6px / 7px 1px no-repeat, linear-gradient(#000, #000) 5px 7px / 5px 1px no-repeat, linear-gradient(#000, #000) 6px 8px / 3px 1px no-repeat, linear-gradient(#000, #000) 7px 9px / 1px 1px no-repeat, #ffc;
    pointer-events: none;
}

/* work area */
main {
    display: flex;
    flex: 1;
    min-height: 0;
}
.side {
    width: 25px;
    border-top: 1px solid #fff;
    border-right: 1px solid #999;
}
.vbar {
    display: flex;
    flex-direction: column;
    width: 22px;
    padding: 2px 0 1px;
    border-bottom: 1px solid #999;
}
.vbar .grip {
    width: 22px;
    height: 6px;
    margin: 0 0 4px;
    border-width: 1px 1px 1px 0;
    background: linear-gradient(transparent 1px, #999 1px, #999 2px, transparent 2px);
}
.vbar .tb {
    width: 20px;
}
.vbar .sep {
    width: 22px;
    height: 3px;
    margin: 4px 0 1px;
    border: 0 solid transparent;
    border-width: 1px 0;
    border-bottom-color: #fff;
}
.canvas {
    position: relative;
    flex: 1;
    border-top: 1px solid #000;
    border-left: 1px solid #000;
    background: linear-gradient(#669 36px, #699 36px 93px, #69c 93px 142px, #99c 142px 231px, #9cc 231px 295px, #ccc 295px 380px, #ccf 380px 426px, #cff 426px 448px, #fff 448px);
}
.model {
    position: absolute;
    left: 313px;
    top: 51px;
    width: 360px;
    height: 410px;
}
.axes {
    position: absolute;
    left: 20px;
    top: 456px;
    width: 52px;
    height: 38px;
    font: bold 30px "Liberation Mono", monospace;
}
.catalog {
    width: 29px;
    padding-left: 2px;
    border-right: 1px solid #fff;
    border-bottom: 1px solid #999;
}
.tabs {
    display: flex;
    flex-direction: column;
    height: 100%;
    padding-bottom: 20px;
    border-left: 1px solid #999;
    box-shadow: inset 2px 0 #ffc, inset 3px 0 #000;
}
.tabs button {
    width: 20px;
    margin-left: 3px;
    padding: 6px 0;
    border: 1px solid #999;
    border-width: 0 1px 1px 0;
    border-radius: 0 0 4px 0;
    font-size: 15px;
    line-height: 19px;
    writing-mode: vertical-rl;
    text-orientation: sideways;
}
.tabs button:first-child {
    flex: 1;
}

/* sketch rows and status */
.row.sketch {
    padding-left: 25px;
    border-bottom: 0;
}
.sketch .bar {
    height: 26px;
    border-bottom: 1px solid #999;
}
.row.wide {
    border-bottom: 1px solid #999;
}
.wide .bar {
    border-bottom: 0;
}
.status {
    display: flex;
    height: 19px;
    border-top: 1px solid #fff;
    line-height: 20px;
    white-space: nowrap;
}
.hint {
    flex: 1;
}
.pane {
    margin-right: 3px;
    padding-left: 1px;
    border: 1px solid;
    border-color: #999 #fff #fff #999;
    line-height: 18px;
}
.size {
    width: 137px;
}
.units {
    width: 131px;
}
.clock {
    width: 46px;
    margin-right: 0;
}

/* floating capture window */
.capture {
    position: absolute;
    top: 2px;
    right: 5px;
    width: 160px;
    border: 1px solid #039;
    border-width: 0 1px 1px;
    border-radius: 7px 7px 0 0;
    background: #05e;
    padding: 0 2px 3px;
}
.caption {
    display: flex;
    align-items: center;
    gap: 3px;
    height: 29px;
    padding: 2px 0 0 1px;
    color: #fff;
}
.gif {
    width: 18px;
    height: 16px;
}
.caption strong {
    flex: 1;
    font: bold 13px/18px "Liberation Mono", monospace;
}
.caption button {
    width: 21px;
    height: 21px;
    border: 1px solid #fff;
    border-radius: 3px;
    background: #36e;
}
.caption .min {
    background: linear-gradient(#fff, #fff) 4px 13px / 7px 3px no-repeat, #36e;
}
.caption .max {
    border-color: #69f;
    background: linear-gradient(#36d, #36d) 5px 6px / 8px 7px no-repeat, linear-gradient(#79f, #79f) 4px 4px / 10px 10px no-repeat, #14c;
}
.caption .quit {
    background: #e53;
}
.quit svg {
    display: block;
    stroke: #fff;
    stroke-width: 2;
}
.capture-menu {
    display: flex;
    height: 20px;
    background: #ffc;
}
.capture-menu button {
    margin: 0 6px 0 5px;
    line-height: 20px;
}
.key {
    font: 12px "Liberation Serif", serif;
}
.capture button:disabled {
    color: #999;
    text-shadow: 1px 1px #fff;
}
.capture-body {
    padding: 4px 4px 3px 2px;
    background: #fff;
    font-size: 13px;
    font-weight: bold;
    line-height: 16px;
}
.capture-body p {
    margin: 0;
    font-size: 12px;
}
.capture-body .notice {
    height: 26px;
    border: 3px double #000;
    border-width: 3px 0;
    line-height: 20px;
    text-align: center;
}
.capture-body button {
    height: 22px;
    padding: 0 8px;
    border: 1px solid;
    border-color: #ffc #666 #666 #ffc;
    box-shadow: inset -1px -1px #999;
    background: #ffc;
}
.actions {
    display: flex;
    gap: 2px;
    padding: 2px 0;
}
.actions button {
    width: 45px;
}
.capture-body h2 {
    display: flex;
    align-items: center;
    gap: 3px;
    margin: 12px 0 0;
    font-size: 13px;
    line-height: 16px;
}
.capture-body h2::before,
.capture-body h2::after {
    content: "";
    width: 10px;
    height: 1px;
    background: #000;
}
.capture-body h2::after {
    flex: 1;
}
.capture-body h2.options {
    margin-top: 18px;
}
.line {
    display: flex;
    align-items: center;
    justify-content: space-between;
    height: 24px;
}
.capture-body label {
    display: flex;
    align-items: center;
    height: 22px;
    white-space: nowrap;
}
.capture-body .mixed {
    font-size: 12px;
}
.capture-body input {
    appearance: none;
    flex: none;
    width: 15px;
    height: 15px;
    margin: 0 5px 0 2px;
    border: 1px solid;
    border-color: #666 #ffc #ffc #666;
    box-shadow: inset 1px 1px #000;
}
.capture-body input:checked::after {
    content: "";
    display: block;
    width: 5px;
    height: 9px;
    margin: 0 0 0 5px;
    border: solid #000;
    border-width: 0 2px 2px 0;
    transform: rotate(42deg);
}
.drop-line {
    justify-content: flex-start;
    height: 18px;
}
.drop {
    position: relative;
    width: 62px;
    height: 17px;
    margin-left: 4px;
    border: 1px solid #000;
    box-shadow: 1px 1px #000;
}
.drop.small {
    width: 57px;
    margin-left: 2px;
}
.drop select {
    display: block;
    appearance: none;
    width: 100%;
    height: 15px;
    padding-left: 12px;
    font-size: 12px;
    line-height: 15px;
}
.drop::after {
    content: "";
    position: absolute;
    top: 4px;
    right: 4px;
    border: solid transparent;
    border-width: 7px 4px 0;
    border-top-color: #000;
    pointer-events: none;
}
```
